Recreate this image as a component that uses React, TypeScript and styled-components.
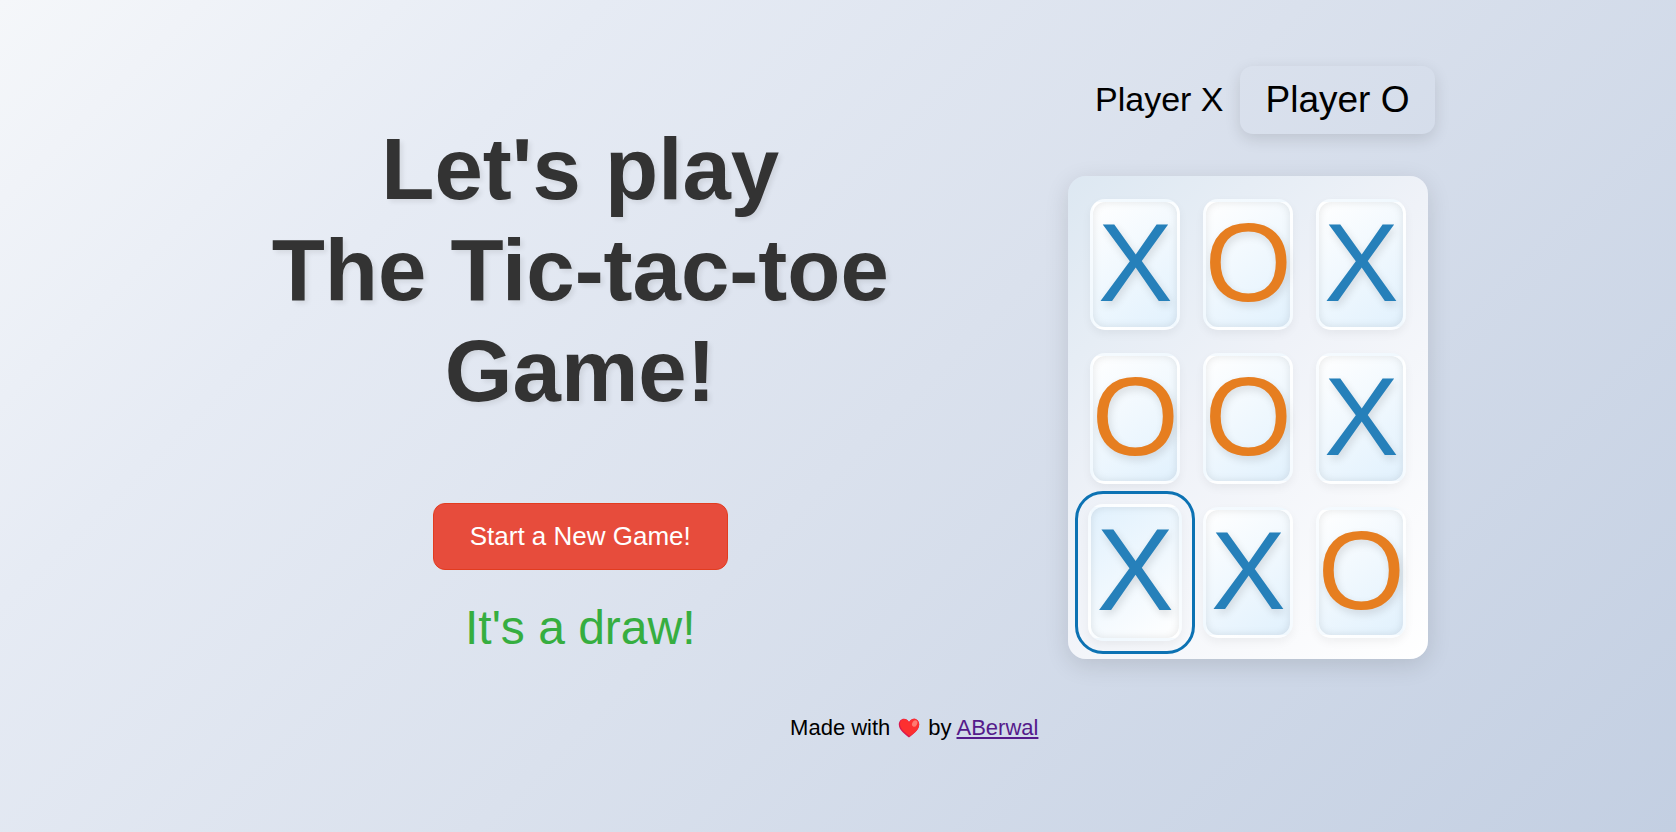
import React, { useState } from "react";
import styled, { createGlobalStyle, css } from "styled-components";

const GlobalStyle = createGlobalStyle`
  * {
    box-sizing: border-box;
  }

  body {
    margin: 0;
    min-height: 100vh;
    background: linear-gradient(135deg, #f5f7fa, #e6ebf4 24%, #dae1ed 52%, #c3cfe2) #c3cfe2;
    font-family: "Liberation Sans", Arial, sans-serif;
    color: #000;
  }
`;

const Page = styled.div`
  min-height: 100vh;
  padding: 69px 0 48px 9.1%;
`;

const Main = styled.main`
  display: grid;
  grid-template-columns: 1fr 1fr;
  max-width: 1336px;
  margin: 0 auto;
`;

const Intro = styled.section`
  display: flex;
  flex-direction: column;
  align-items: center;
  padding-top: 49px;
`;

const Title = styled.h1`
  margin: 0 0 82px;
  font-size: 87px;
  line-height: 101px;
  text-align: center;
  color: #333;
  text-shadow: 3px 3px 5px rgba(0, 0, 0, 0.08);
`;

const NewGameButton = styled.button`
  padding: 16px 36px 17px;
  border: 1px solid #e23c20;
  border-radius: 12px;
  background: #e74c3c;
  color: #fff;
  font-family: inherit;
  font-size: 26px;
  line-height: 32px;
  cursor: pointer;
`;

const Status = styled.p`
  margin: 30px 0 0;
  font-size: 48px;
  line-height: 55px;
  color: #36ae40;
`;

const Game = styled.section`
  display: flex;
  flex-direction: column;
  align-items: center;
  gap: 45px;
`;

const Players = styled.ul`
  display: flex;
  align-items: center;
  height: 62px;
  margin: 0;
  padding: 0;
  list-style: none;
`;

const Player = styled.li<{ $active?: boolean }>`
  padding: 11px 25px 13px;
  border-radius: 13px;
  font-size: 34px;
  line-height: 40px;
  white-space: nowrap;

  ${({ $active }) =>
    $active &&
    css`
      margin: 0 -9px;
      padding: 14px 26px;
      font-size: 37px;
      box-shadow: 0 5px 16px rgba(0, 0, 0, 0.12);
    `}
`;

const Board = styled.div`
  display: grid;
  grid-template-columns: repeat(3, 90px);
  grid-auto-rows: 131px;
  gap: 23px;
  padding: 23px 22px 21px;
  border-radius: 18px;
  background: linear-gradient(135deg, #dde8f2, #eff2f8 45%, #fff);
  box-shadow: 0 6px 24px rgba(0, 0, 0, 0.12);
`;

const Cell = styled.button<{ $mark: string; $selected?: boolean }>`
  display: flex;
  align-items: center;
  justify-content: center;
  padding: 0 0 4px;
  border: 3px solid rgba(255, 255, 255, 0.5);
  border-radius: 15px;
  background: linear-gradient(145deg, #fff, #e1f1fd);
  box-shadow:
    0 4px 10px rgba(0, 0, 0, 0.05),
    inset 0 0 8px rgba(0, 0, 0, 0.1);
  color: ${({ $mark }) => ($mark === "X" ? "#2680ba" : "#e67e20")};
  font-family: inherit;
  font-size: 112px;
  line-height: 125px;
  text-shadow: 2px 4px 8px rgba(0, 0, 0, 0.12);
  cursor: pointer;

  ${({ $selected }) =>
    $selected &&
    css`
      margin: -3px -2px;
      background: linear-gradient(145deg, #e1f1fd, #fff);
      outline: 3px solid #0c72b3;
      outline-offset: 10px;
      font-size: 116px;
    `}
`;

const Footer = styled.footer`
  display: flex;
  align-items: center;
  justify-content: center;
  gap: 8px;
  margin-top: 57px;
  font-size: 22px;
  line-height: 24px;
`;

const AuthorLink = styled.a`
  color: #551a8b;
`;

const marks = ["X", "O", "X", "O", "O", "X", "X", "X", "O"];

function Heart() {
  return (
    <svg width="22" height="20" viewBox="0 0 22 20" role="img" aria-label="love">
      <path
        d="M11 19.500C8 17 .8 12.500.8 6.500.8 3 3.200.7 6 .7c2.200 0 4 1.300 5 3.300C12 2 13.800.7 16 .7c2.800 0 5.200 2.300 5.200 5.800C21.200 12.500 14 17 11 19.500z"
        fill="#d9184f"
      />
      <path
        d="M12 18C8.500 16 2.200 11.500 1.900 6 1.900 3 4 1.100 6.300 1.100c2.200 0 3.900 1.500 4.800 3.400C12 2.500 13.800.7 16 .7c2.800 0 5.200 2.300 5.200 5.800C21.200 11.800 15.500 15.800 12 18z"
        fill="#fc3030"
      />
      <ellipse cx="16.700" cy="5.500" rx="2.400" ry="3.400" fill="#ff7a70" transform="rotate(28 16.700 5.500)" />
    </svg>
  );
}

export default function App() {
  const [selected, setSelected] = useState(6);

  return (
    <>
      <GlobalStyle />
      <Page>
        <Main>
          <Intro>
            <Title>
              Let's play
              <br />
              The Tic-tac-toe
              <br />
              Game!
            </Title>
            <NewGameButton type="button">Start a New Game!</NewGameButton>
            <Status role="status">It's a draw!</Status>
          </Intro>
          <Game>
            <Players>
              <Player>Player X</Player>
              <Player $active>Player O</Player>
            </Players>
            <Board>
              {marks.map((mark, index) => (
                <Cell
                  key={index}
                  type="button"
                  $mark={mark}
                  $selected={index === selected}
                  onClick={() => setSelected(index)}
                >
                  {mark}
                </Cell>
              ))}
            </Board>
          </Game>
        </Main>
        <Footer>
          <span>Made with</span>
          <Heart />
          <span>
            by <AuthorLink href="#author">ABerwal</AuthorLink>
          </span>
        </Footer>
      </Page>
    </>
  );
}
